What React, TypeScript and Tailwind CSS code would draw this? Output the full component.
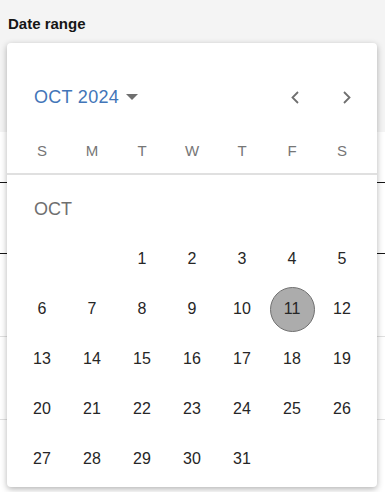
import React from "react";

const font = { fontFamily: '"Liberation Sans", Arial, sans-serif' };

const weekdays = ["S", "M", "T", "W", "T", "F", "S"];

export default function App() {
  const cells: (number | null)[] = [null, null];
  for (let d = 1; d <= 31; d++) cells.push(d);

  return (
    <div className="relative w-[385px] h-[492px] overflow-hidden bg-white" style={font}>
      {/* underlying page */}
      <div className="h-[132px] bg-[#f4f4f4] pt-[15px] pl-[8px]">
        <div className="text-[15px] leading-[18px] font-bold text-[#161616]">Date range</div>
      </div>
      <div className="h-[50px]" />
      <div className="h-[1px] bg-[#161616]" />
      <div className="h-[70px]" />
      <div className="h-[1px] bg-[#161616]" />
      <div className="h-[82px]" />
      <div className="h-[1px] bg-[#e0e0e0]" />
      <div className="h-[82px]" />
      <div className="h-[1px] bg-[#e0e0e0]" />

      {/* calendar popup */}
      <div className="absolute left-[7px] top-[43px] w-[370px] h-[444px] bg-white rounded-[4px] shadow-[0_2px_6px_rgba(0,0,0,0.3)] px-[10px]">
        <div className="mt-[34px] h-[40px] flex items-center justify-between">
          <div className="flex items-center pl-[17px]">
            <span className="text-[18px] leading-[20px] tracking-[0.3px] text-[#4275b8]">OCT 2024</span>
            <svg className="ml-[7px]" width="12" height="6" viewBox="0 0 12 6">
              <polygon points="0,0 12,0 6,6" fill="#6f6f6f" />
            </svg>
          </div>
          <div className="flex items-center gap-[12px]">
            <button className="w-[40px] h-[40px] flex items-center justify-center">
              <svg width="10" height="13" viewBox="0 0 10 13">
                <polyline points="8,1 2.5,6.5 8,12" fill="none" stroke="#6f6f6f" strokeWidth="1.8" />
              </svg>
            </button>
            <button className="w-[40px] h-[40px] flex items-center justify-center">
              <svg width="10" height="13" viewBox="0 0 10 13">
                <polyline points="2,1 7.5,6.5 2,12" fill="none" stroke="#6f6f6f" strokeWidth="1.8" />
              </svg>
            </button>
          </div>
        </div>

        <div className="mt-[14px] h-[40px] grid grid-cols-7">
          {weekdays.map((w, i) => (
            <div key={i} className="flex items-center justify-center text-[15px] text-[#767676]">
              {w}
            </div>
          ))}
        </div>
        <div className="mt-[2px] h-[2px] bg-[#e0e0e0] -mx-[10px]" />

        <div className="mt-[24px] pl-[17px] text-[18px] leading-[20px] text-[#6f6f6f]">OCT</div>

        <div className="mt-[15px] grid grid-cols-7">
          {cells.map((d, i) => (
            <div key={i} className="h-[50px] flex items-center justify-center">
              {d === 11 ? (
                <div className="w-[45px] h-[45px] rounded-full bg-[#acacac] border border-[#707070] flex items-center justify-center text-[16px] text-[#262626]">
                  {d}
                </div>
              ) : (
                <span className="text-[16px] text-[#262626]">{d ?? ""}</span>
              )}
            </div>
          ))}
        </div>
      </div>
    </div>
  );
}
